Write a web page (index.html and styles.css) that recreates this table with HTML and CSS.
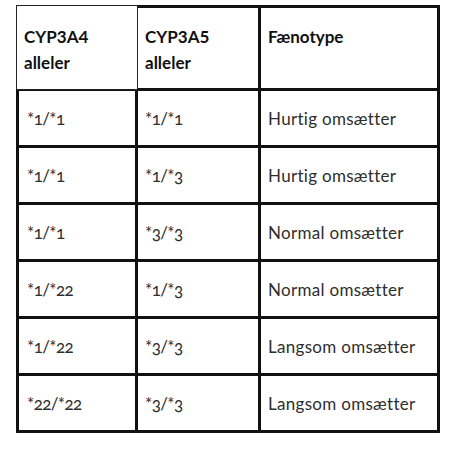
FILE: index.html
```html
<!DOCTYPE html>
<html lang="da">
<head>
  <meta charset="UTF-8" />
  <meta name="viewport" content="width=device-width, initial-scale=1" />
  <title>CYP3A4 / CYP3A5 fænotyper</title>
  <link rel="stylesheet" href="styles.css">
</head>
<body>
  <div class="wrap">
    <table class="geno-table">
      <colgroup>
        <col class="c1">
        <col class="c2">
        <col class="c3">
      </colgroup>
      <thead>
        <tr>
          <th class="selected"><span class="label">CYP3A4 alleler</span></th>
          <th>CYP3A5 alleler</th>
          <th>Fænotype</th>
        </tr>
      </thead>
      <tbody>
        <tr><td class="num">*1/*1</td><td class="num">*1/*1</td><td>Hurtig omsætter</td></tr>
        <tr><td class="num">*1/*1</td><td class="num">*1/*3</td><td>Hurtig omsætter</td></tr>
        <tr><td class="num">*1/*1</td><td class="num">*3/*3</td><td>Normal omsætter</td></tr>
        <tr><td class="num">*1/*22</td><td class="num">*1/*3</td><td>Normal omsætter</td></tr>
        <tr><td class="num">*1/*22</td><td class="num">*3/*3</td><td>Langsom omsætter</td></tr>
        <tr><td class="num">*22/*22</td><td class="num">*3/*3</td><td>Langsom omsætter</td></tr>
      </tbody>
    </table>
  </div>
</body>
</html>
```

FILE: styles.css
```css
body {
  margin: 0;
  background: #fff;
  font-family: Lato, 'Open Sans', sans-serif;
  color: #2e2e2e;
}

.wrap {
  padding: 5px 0 0 16px;
}

.geno-table {
  border-collapse: collapse;
  table-layout: fixed;
  width: 424px;
}

.geno-table .c1 { width: 119px; }
.geno-table .c2 { width: 123px; }
.geno-table .c3 { width: 179px; }

.geno-table th,
.geno-table td {
  border: 3px solid #111;
  text-align: left;
  padding: 0 7px;
}

.geno-table th {
  height: 64px;
  vertical-align: top;
  padding-top: 16px;
  font-size: 17px;
  font-weight: 700;
  line-height: 26px;
  color: #111;
}

.geno-table td {
  height: 54px;
  font-size: 17px;
  letter-spacing: 0.3px;
  vertical-align: middle;
}

.geno-table td.num {
  font-variant-numeric: oldstyle-nums;
  letter-spacing: -0.6px;
  padding-left: 8px;
}

.geno-table td.num + td.num {
  padding-left: 7px;
}

/* first header cell shows a thin outline over the thick grid */
.geno-table th.selected {
  position: relative;
  padding-left: 5px;
}

.geno-table th.selected::before {
  content: '';
  position: absolute;
  top: -3px;
  left: -3px;
  right: -3px;
  bottom: -2px;
  background: #fff;
  border: 1px solid #222;
  z-index: 1;
}

.geno-table th.selected .label {
  position: relative;
  z-index: 2;
}
```
